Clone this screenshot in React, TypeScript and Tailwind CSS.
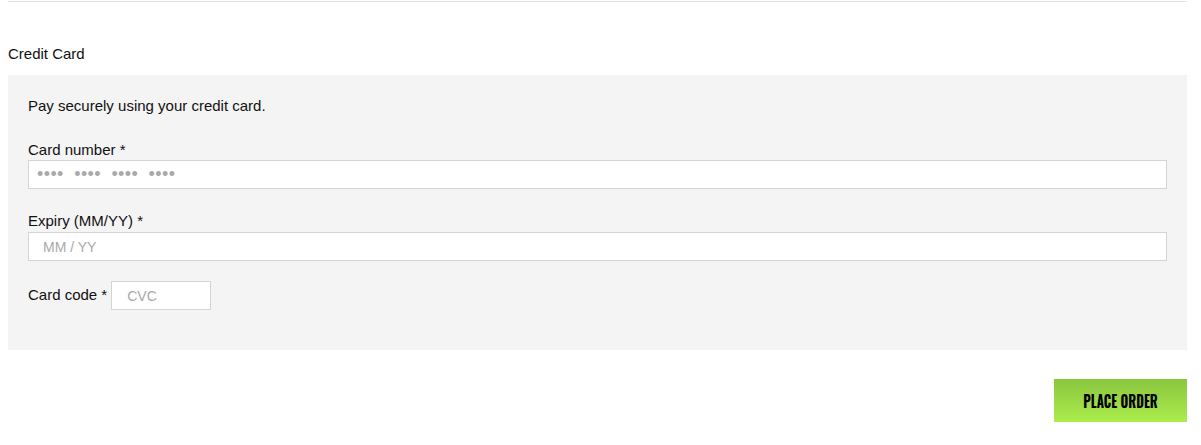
import React from "react";

export default function App() {
  const font = { fontFamily: '"Liberation Sans", Arial, sans-serif' };
  return (
    <div className="w-[1201px] h-[445px] bg-white text-[15px] leading-[20px] text-[#111]" style={font}>
      <div className="ml-2 mr-[14px] pt-px">
        <div className="border-t border-[#e2e2e2]" />
        <div className="mt-[42px] leading-[20px]">Credit Card</div>
        <div className="mt-[11px] bg-[#f4f4f4] px-5 pt-[21px] pb-[40px]">
          <p className="leading-[20px]">Pay securely using your credit card.</p>
          <div className="mt-6">
            <label className="block leading-[20px]">Card number *</label>
            <input
              readOnly
              placeholder="•••• •••• •••• ••••"
              className="block w-full h-[29px] bg-white border border-[#d4d4d4] pl-[8px] text-[18px] tracking-[0.4px] [word-spacing:5px] placeholder:text-[#a9a9a9] outline-none"
              style={font}
            />
          </div>
          <div className="mt-[22px]">
            <label className="block leading-[20px] mb-px">Expiry (MM/YY) *</label>
            <input
              readOnly
              placeholder="MM / YY"
              className="block w-full h-[29px] bg-white border border-[#d4d4d4] pl-[14px] text-[14px] placeholder:text-[#a9a9a9] outline-none"
              style={font}
            />
          </div>
          <div className="mt-5 flex items-center">
            <label className="leading-[20px] mt-[-2px]">Card code *</label>
            <input
              readOnly
              placeholder="CVC"
              className="ml-[4px] w-[100px] h-[29px] bg-white border border-[#d4d4d4] pl-[15px] text-[14px] placeholder:text-[#a9a9a9] outline-none"
              style={font}
            />
          </div>
        </div>
        <div className="mt-[29px] flex justify-end">
          <button
            className="w-[133px] h-[43px] bg-gradient-to-b from-[#8bc63f] to-[#abed4c] text-black text-[16.5px] font-bold uppercase"
            style={{ fontFamily: '"Oswald", "Liberation Sans Narrow", "DejaVu Sans Condensed", "Roboto Condensed", "Liberation Sans", sans-serif' }}
          >
            <span className="inline-block scale-x-[0.8]">Place Order</span>
          </button>
        </div>
      </div>
    </div>
  );
}
